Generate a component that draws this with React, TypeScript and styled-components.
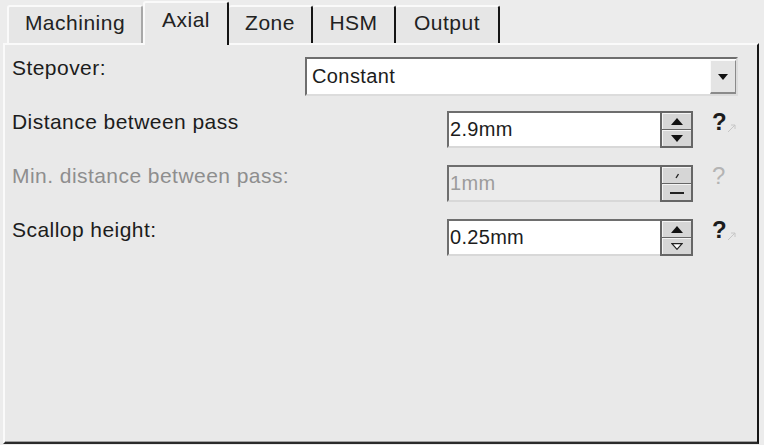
import React from "react";
import styled, { createGlobalStyle } from "styled-components";

const Global = createGlobalStyle`
  html, body {
    margin: 0;
    padding: 0;
    background: #ececec;
  }
  body {
    font-family: "Liberation Sans", Arial, sans-serif;
    color: #1c1c1c;
  }
`;

const Window = styled.div`
  width: 764px;
  height: 445px;
  box-sizing: border-box;
  padding: 0 5px 1px 3px;
  display: flex;
  flex-direction: column;
  background: #ececec;
  overflow: hidden;
`;

const TabStrip = styled.div`
  height: 43px;
  display: flex;
  align-items: flex-end;
  padding-left: 4px;
`;

const Tab = styled.div<{ $w: number; $active?: boolean; $dark?: boolean; $first?: boolean }>`
  width: ${(p) => p.$w}px;
  height: ${(p) => (p.$active ? 44 : 38)}px;
  margin-bottom: ${(p) => (p.$active ? -2 : 0)}px;
  box-sizing: border-box;
  border-top: 2px solid #fafafa;
  border-left: ${(p) => (p.$first || p.$active ? "2px solid #fafafa" : "none")};
  border-right: 2px solid ${(p) => (p.$dark ? "#141414" : "#a8a8a8")};
  border-radius: 3px 3px 0 0;
  background: ${(p) => (p.$active ? "#e9e9e9" : "#e6e6e6")};
  display: flex;
  align-items: center;
  justify-content: center;
  padding-bottom: ${(p) => (p.$active ? 8 : 4)}px;
  font-size: 21px;
  letter-spacing: 0.5px;
  color: #222;
  position: relative;
  z-index: ${(p) => (p.$active ? 1 : 0)};
`;

const Panel = styled.div`
  flex: 1;
  box-sizing: border-box;
  border-top: 2px solid #fafafa;
  border-left: 2px solid #fafafa;
  border-right: 2px solid #161616;
  border-bottom: 2px solid #2a2a2a;
  box-shadow: inset 0 -1px 0 #a0a0a0;
  background: #e9e9e9;
  padding: 12px 19px 0 7px;
  display: flex;
  flex-direction: column;
  gap: 17px;
`;

const Row = styled.div`
  display: flex;
  align-items: flex-start;
  height: 37px;
`;

const Label = styled.div<{ $disabled?: boolean }>`
  flex: 1;
  font-size: 21px;
  line-height: 24px;
  margin-top: -1px;
  letter-spacing: 0.45px;
  color: ${(p) => (p.$disabled ? "#8e8e8e" : "#1c1c1c")};
`;

const Combo = styled.div`
  width: 433px;
  height: 39px;
  box-sizing: border-box;
  border-top: 2px solid #6e6e6e;
  border-left: 2px solid #6e6e6e;
  border-right: 2px solid #dcdcdc;
  border-bottom: 2px solid #dcdcdc;
  background: #fff;
  display: flex;
  align-items: stretch;
`;

const ComboText = styled.div`
  flex: 1;
  display: flex;
  align-items: center;
  padding-left: 5px;
  font-size: 20px;
  letter-spacing: 0.4px;
`;

const ComboButton = styled.div`
  width: 26px;
  margin: 1px 0 0 0;
  box-sizing: border-box;
  border-top: 1px solid #fafafa;
  border-left: 1px solid #fafafa;
  border-right: 1px solid #8a8a8a;
  border-bottom: 2px solid #8a8a8a;
  background: #e4e4e4;
  display: flex;
  align-items: center;
  justify-content: center;
`;

const Spin = styled.div<{ $disabled?: boolean }>`
  width: 246px;
  height: 37px;
  box-sizing: border-box;
  border-top: 2px solid #6e6e6e;
  border-left: 2px solid #6e6e6e;
  border-bottom: 2px solid #d8d8d8;
  background: ${(p) => (p.$disabled ? "#ebebeb" : "#fff")};
  display: flex;
`;

const SpinValue = styled.div<{ $disabled?: boolean }>`
  flex: 1;
  display: flex;
  align-items: center;
  padding-left: 1px;
  font-size: 20px;
  letter-spacing: 0.3px;
  color: ${(p) => (p.$disabled ? "#9c9c9c" : "#1c1c1c")};
`;

const SpinButtons = styled.div`
  width: 33px;
  margin-top: -2px;
  margin-bottom: -2px;
  box-sizing: border-box;
  border: 2px solid #666;
  background: #666;
  display: flex;
  flex-direction: column;
  gap: 1px;
`;

const SpinHalf = styled.div`
  flex: 1;
  background: #d6d6d6;
  border-top: 1px solid #f4f4f4;
  border-left: 1px solid #f4f4f4;
  display: flex;
  align-items: center;
  justify-content: center;
`;

const Help = styled.div<{ $disabled?: boolean }>`
  width: 45px;
  padding-left: 19px;
  box-sizing: border-box;
  display: flex;
  align-items: flex-start;
  font-size: 24px;
  color: ${(p) => (p.$disabled ? "#b4b4b4" : "#1c1c1c")};
  font-weight: ${(p) => (p.$disabled ? "normal" : "bold")};
`;

const HelpMark = styled.span`
  line-height: 24px;
  margin-top: -1px;
`;

const Up = () => (
  <svg width="12" height="7" viewBox="0 0 12 7">
    <path d="M6 0 L12 7 L0 7 Z" fill="#111" />
  </svg>
);

const Down = ({ hollow }: { hollow?: boolean }) => (
  <svg width="12" height="7" viewBox="0 0 12 7">
    {hollow ? (
      <path d="M1 0.7 L11 0.7 L6 6.3 Z" fill="#fff" stroke="#222" strokeWidth="1.2" />
    ) : (
      <path d="M0 0 L12 0 L6 7 Z" fill="#111" />
    )}
  </svg>
);

const DisabledUp = () => (
  <svg width="12" height="7" viewBox="0 0 12 7">
    <path d="M5 6 L7.5 2" stroke="#222" strokeWidth="1.4" />
  </svg>
);

const DisabledDown = () => (
  <svg width="14" height="4" viewBox="0 0 14 4">
    <rect x="0" y="1" width="14" height="2" fill="#222" />
  </svg>
);

const Tail = () => (
  <svg width="10" height="10" viewBox="0 0 10 10" style={{ marginTop: 12 }}>
    <path d="M1 9 L8 2 M4 2 L8 2 L8 6" stroke="#c6c6c6" strokeWidth="1" fill="none" />
  </svg>
);

type SpinnerProps = {
  value: string;
  disabled?: boolean;
  hollowDown?: boolean;
};

function Spinner({ value, disabled, hollowDown }: SpinnerProps) {
  return (
    <Spin $disabled={disabled}>
      <SpinValue $disabled={disabled}>{value}</SpinValue>
      <SpinButtons>
        <SpinHalf>{disabled ? <DisabledUp /> : <Up />}</SpinHalf>
        <SpinHalf>{disabled ? <DisabledDown /> : <Down hollow={hollowDown} />}</SpinHalf>
      </SpinButtons>
    </Spin>
  );
}

const tabs = [
  { name: "Machining", w: 136 },
  { name: "Axial", w: 86 },
  { name: "Zone", w: 84 },
  { name: "HSM", w: 83 },
  { name: "Output", w: 104 },
];

export default function App() {
  return (
    <>
      <Global />
      <Window>
        <TabStrip>
          {tabs.map((t, i) => (
            <Tab key={t.name} $w={t.w} $first={i === 0} $active={i === 1} $dark={i > 0}>
              {t.name}
            </Tab>
          ))}
        </TabStrip>
        <Panel>
          <Row>
            <Label>Stepover:</Label>
            <Combo>
              <ComboText>Constant</ComboText>
              <ComboButton>
                <svg width="10" height="6" viewBox="0 0 10 6">
                  <path d="M0 0 L10 0 L5 6 Z" fill="#111" />
                </svg>
              </ComboButton>
            </Combo>
          </Row>
          <Row>
            <Label>Distance between pass</Label>
            <Spinner value="2.9mm" />
            <Help>
              <HelpMark>?</HelpMark>
              <Tail />
            </Help>
          </Row>
          <Row>
            <Label $disabled>Min. distance between pass:</Label>
            <Spinner value="1mm" disabled />
            <Help $disabled>
              <HelpMark>?</HelpMark>
            </Help>
          </Row>
          <Row>
            <Label>Scallop height:</Label>
            <Spinner value="0.25mm" hollowDown />
            <Help>
              <HelpMark>?</HelpMark>
              <Tail />
            </Help>
          </Row>
        </Panel>
      </Window>
    </>
  );
}
